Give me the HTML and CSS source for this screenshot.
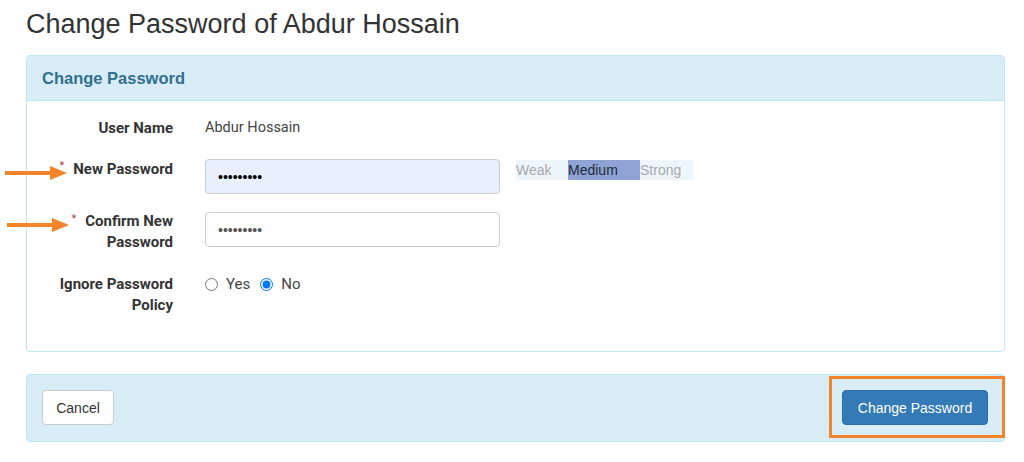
FILE: index.html
```html
<!DOCTYPE html>
<html>
<head>
    <link rel="stylesheet" href="styles.css">
</head>
<body>
    <div id="page">
        <h1>Change Password of Abdur Hossain</h1>

        <div class="panel">
            <div class="panel-heading">Change Password</div>
            <div class="panel-body">
                <div class="row row-user">
                    <label class="label">User Name</label>
                    <div class="static">Abdur Hossain</div>
                </div>
                <div class="row row-new">
                    <label class="label"><span class="req">*</span>New Password</label>
                    <div class="field">
                        <input type="password" class="input autofill" value="123456789">
                        <div class="strength">
                            <span class="weak">Weak</span>
                            <span class="medium">Medium</span>
                            <span class="strong">Strong</span>
                        </div>
                    </div>
                </div>
                <div class="row row-confirm">
                    <label class="label"><span class="req">*</span>Confirm New Password</label>
                    <div class="field">
                        <input type="password" class="input" value="123456789">
                    </div>
                </div>
                <div class="row row-ignore">
                    <label class="label">Ignore Password Policy</label>
                    <div class="radios">
                        <label><input type="radio" name="ignore"> Yes</label>
                        <label><input type="radio" name="ignore" checked> No</label>
                    </div>
                </div>
            </div>
        </div>

        <div class="panel footer">
            <button class="btn btn-default">Cancel</button>
            <button class="btn btn-primary">Change Password</button>
            <div class="highlight"></div>
        </div>

        <!-- annotation arrows -->
        <svg class="arrow arrow-1" width="62" height="16" viewBox="0 0 62 16">
            <path d="M0 8 H48" stroke="#f4842a" stroke-width="4" stroke-linecap="round"/>
            <path d="M45 1 L62 8 L45 15 Z" fill="#f4842a"/>
        </svg>
        <svg class="arrow arrow-2" width="62" height="16" viewBox="0 0 62 16">
            <path d="M0 8 H48" stroke="#f4842a" stroke-width="4" stroke-linecap="round"/>
            <path d="M45 1 L62 8 L45 15 Z" fill="#f4842a"/>
        </svg>
    </div>
</body>
</html>
```

FILE: styles.css
```css
body {
    margin: 0;
    background-color: #fff;
    font-family: Roboto, "Liberation Sans", Arial, sans-serif;
    color: #333;
}
#page {
    position: relative;
    padding: 9px 19px 0 26px;
}
h1 {
    margin: 0 0 16px 0;
    font-family: "Liberation Sans", Arial, sans-serif;
    font-size: 27px;
    font-weight: normal;
    line-height: 30px;
    color: #333;
}
.panel {
    border: 1px solid #bce8f1;
    border-radius: 4px;
    background-color: #fff;
}
.panel-heading {
    background-color: #d9edf7;
    border-bottom: 1px solid #bce8f1;
    padding: 12px 15px;
    font-family: "Liberation Sans", Arial, sans-serif;
    font-size: 16.5px;
    font-weight: bold;
    line-height: 20px;
    color: #31708f;
}
.panel-body {
    padding: 17px 0 35px 0;
}
.row {
    display: grid;
    grid-template-columns: 146px 1fr;
    column-gap: 32px;
    font-size: 14.5px;
}
.label {
    text-align: right;
    font-size: 15px;
    font-weight: bold;
    color: #333;
    line-height: 20px;
}
.req {
    color: #a94442;
    font-size: 11px;
    font-weight: normal;
    vertical-align: top;
    position: relative;
    top: -3px;
    margin-right: 9px;
}
.static {
    line-height: 20px;
    color: #444;
}
.row-new {
    margin-top: 21px;
}
.row-confirm {
    margin-top: 17px;
}
.row-confirm .label,
.row-ignore .label {
    line-height: 21px;
}
.row-confirm .field {
    padding-top: 1px;
}
.row-ignore {
    margin-top: 21px;
}
.field {
    display: flex;
    align-items: flex-start;
}
.input {
    box-sizing: border-box;
    width: 295px;
    height: 35px;
    margin: 0;
    padding: 6px 12px;
    border: 1px solid #ccc;
    border-radius: 4px;
    font-family: "Liberation Sans", Arial, sans-serif;
    font-size: 14px;
    color: #555;
    background-color: #fff;
}
.input.autofill {
    background-color: #e8f0fe;
    color: #000;
}
.strength {
    display: flex;
    margin: 1px 0 0 16px;
    height: 20px;
    background-color: #eef6fd;
    font-family: "Liberation Sans", Arial, sans-serif;
    font-size: 14px;
    line-height: 20px;
    color: #a8a8a8;
}
.strength span {
    display: block;
}
.weak {
    width: 52px;
}
.medium {
    width: 72px;
    background-color: #8fa4d4;
    color: #1f2a3a;
}
.strong {
    width: 53px;
}
.radios {
    display: flex;
    gap: 10px;
    line-height: 21px;
    color: #444;
    font-size: 15px;
}
.radios label {
    display: flex;
    align-items: center;
    gap: 8px;
    height: 21px;
}
.radios input {
    margin: 0;
    width: 13px;
    height: 13px;
}
.footer {
    position: relative;
    margin-top: 22px;
    background-color: #d9edf7;
    display: flex;
    justify-content: space-between;
    padding: 15px 16px 16px 15px;
}
.btn {
    height: 35px;
    padding: 6px 12px;
    font-family: "Liberation Sans", Arial, sans-serif;
    font-size: 14px;
    border-radius: 4px;
    border: 1px solid transparent;
    cursor: pointer;
}
.btn-default {
    width: 72px;
    color: #333;
    background-color: #fff;
    border-color: #ccc;
}
.btn-primary {
    width: 146px;
    color: #fff;
    background-color: #337ab7;
    border-color: #2e6da4;
}
.highlight {
    position: absolute;
    left: 802px;
    top: 1px;
    width: 170px;
    height: 56px;
    border: 3px solid #f4842a;
}
.arrow {
    position: absolute;
}
.arrow-1 {
    left: 5px;
    top: 165px;
}
.arrow-2 {
    left: 7px;
    top: 217px;
}
```
